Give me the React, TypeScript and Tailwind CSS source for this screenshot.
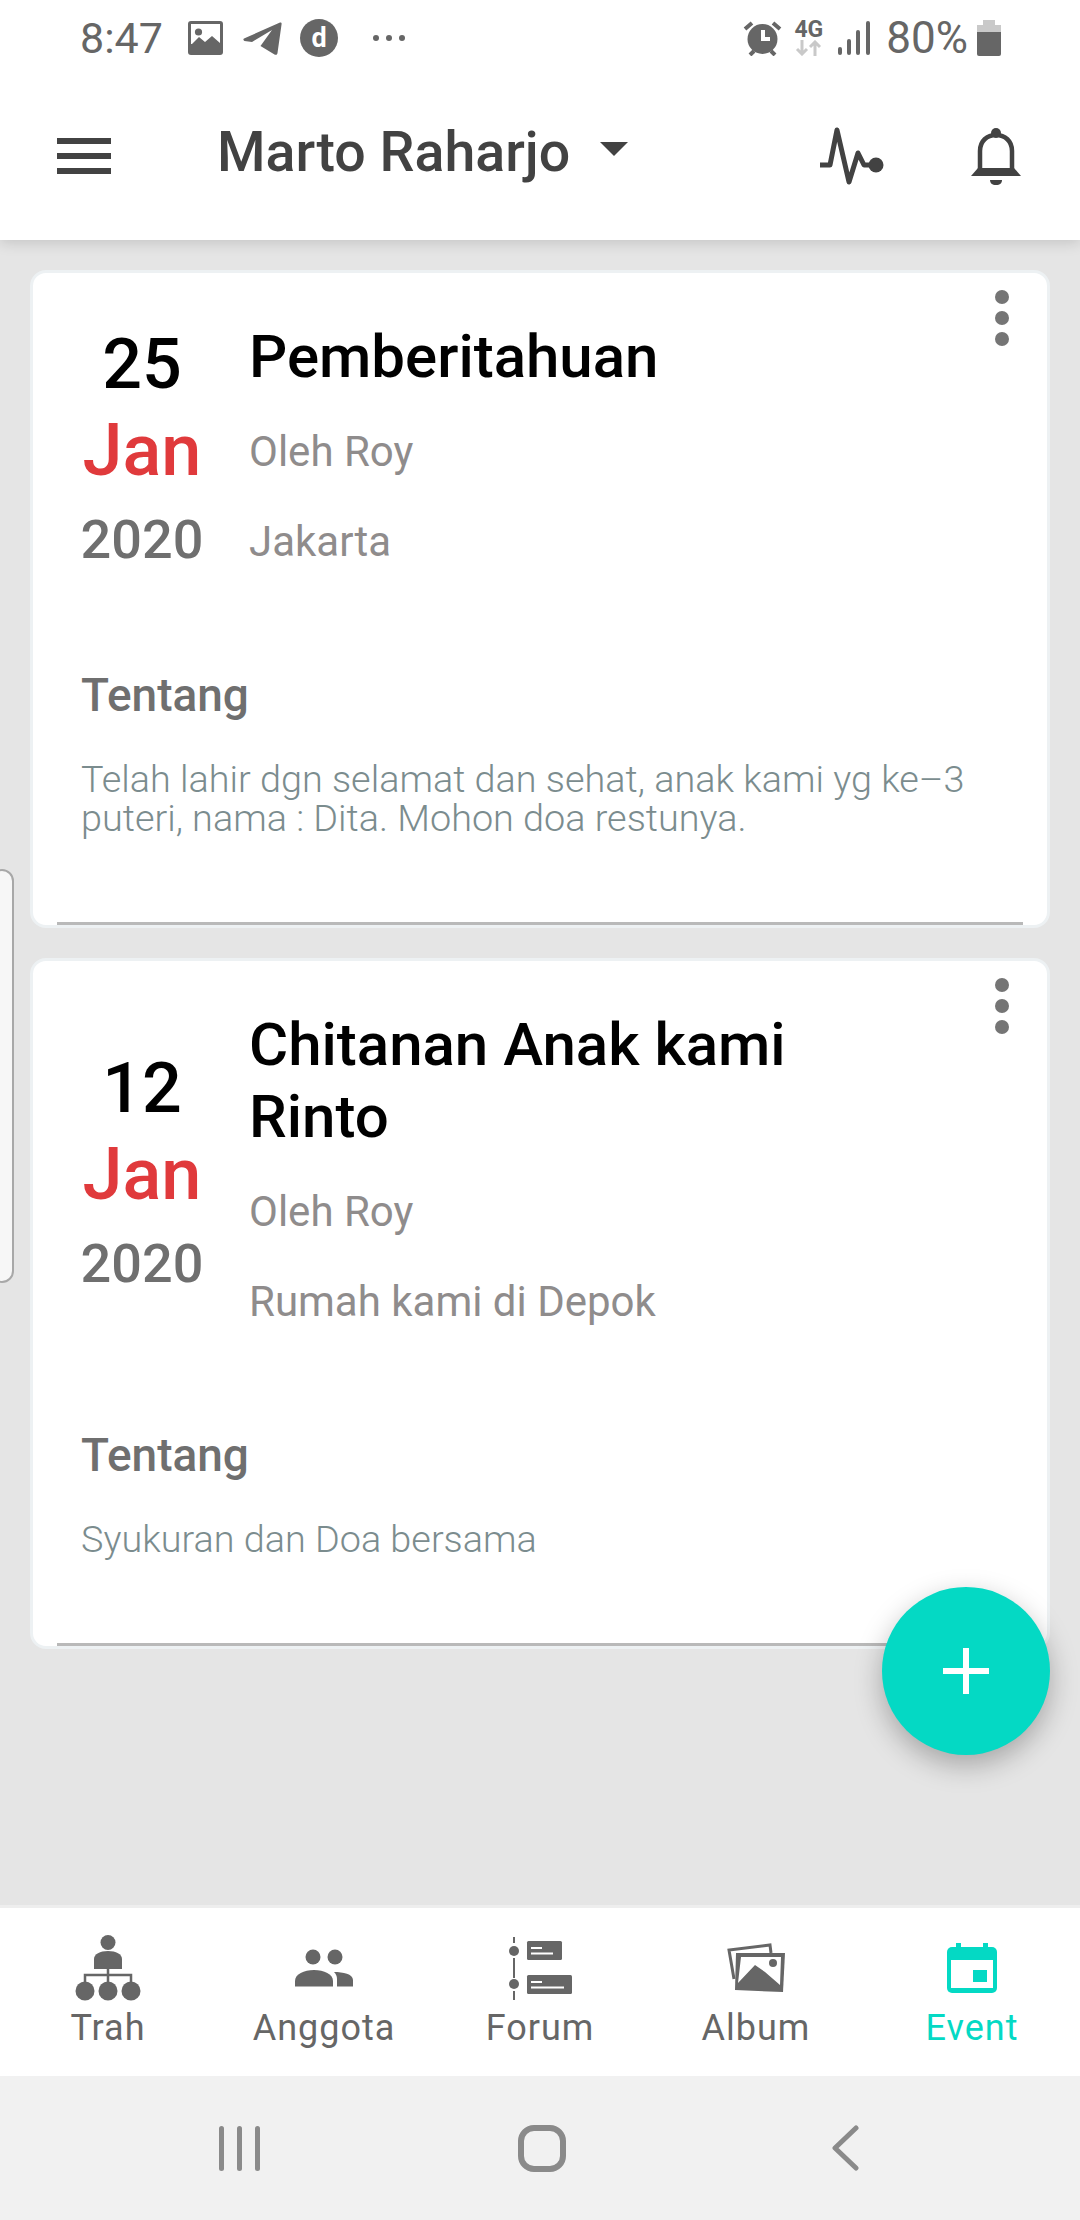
const font = { fontFamily: "Roboto, sans-serif" };

const ImageIcon = () => (
  <svg width="35" height="34" viewBox="0 0 35 34" className="text-[#666]">
    <rect width="35" height="34" rx="3" fill="currentColor" />
    <rect x="3" y="3" width="29" height="20" fill="#fff" />
    <circle cx="10.5" cy="11" r="3.6" fill="currentColor" />
    <path d="M3 24l8-8 6 5 7-6 8 7v6H3z" fill="currentColor" />
  </svg>
);

const TelegramIcon = () => (
  <svg width="39" height="33" viewBox="0 0 39 33" className="text-[#666]">
    <path
      d="M1 16.5 37 0.5c1-.4 1.8.3 1.6 1.4L34.5 31c-.2 1.8-1.700 2.300-3 1.500L17.500 24 29 8 9 20 1.500 19c-1.300-.4-1.500-2-.5-2.500z"
      fill="currentColor"
    />
  </svg>
);

const AlarmIcon = () => (
  <svg width="39" height="36" viewBox="0 0 39 36">
    <circle cx="19.5" cy="19" r="15" fill="#666" />
    <path d="M2 9 9 3M37 9l-7-6" stroke="#666" strokeWidth="4" />
    <path d="M7 35l4-4M32 35l-4-4" stroke="#666" strokeWidth="4" />
    <path d="M18 10v11h9v-4h-5v-7z" fill="#fff" />
  </svg>
);

const Pulse = () => (
  <svg width="64" height="58" viewBox="0 0 64 58" fill="none">
    <path
      d="M0 38h10L17 3l12 52 9-29 6 12h10"
      stroke="#424242"
      strokeWidth="5"
      strokeLinecap="round"
      strokeLinejoin="round"
    />
    <circle cx="56" cy="38" r="7.5" fill="#424242" />
  </svg>
);

const Bell = () => (
  <svg width="50" height="58" viewBox="0 0 50 58" fill="none">
    <circle cx="25" cy="6" r="5" fill="#424242" />
    <path d="M9 46V24C9 14 16 8 25 8s16 6 16 16v22" stroke="#424242" strokeWidth="4.5" />
    <path d="M0 49 7 41h36l7 8z" fill="#424242" />
    <path d="M19 53h12c0 3-2 5-6 5s-6-2-6-5z" fill="#424242" />
  </svg>
);

const TrahIcon = () => (
  <svg width="66" height="66" viewBox="0 0 66 66" fill="#666">
    <circle cx="33" cy="7.5" r="7.5" />
    <path d="M19 34V24c0-5 6-8 14-8s14 3 14 8v10z" />
    <path d="M33 34v14M10 48v-8h46v8" stroke="#666" strokeWidth="2.500" fill="none" />
    <circle cx="10" cy="56" r="9.500" />
    <circle cx="33" cy="56" r="9.500" />
    <circle cx="56" cy="56" r="9.500" />
  </svg>
);

const AnggotaIcon = () => (
  <svg width="58" height="38" viewBox="0 0 58 38" fill="#666">
    <circle cx="18" cy="8" r="7.500" />
    <circle cx="40" cy="8" r="7.500" />
    <path d="M0 37.500V32c0-7 9-11 19-11s19 4 19 11v5.500z" />
    <path d="M42 37.500V30c0-3-1-5-3-7 9 0 19 2 19 8v6.500z" />
  </svg>
);

const ForumIcon = () => (
  <svg width="63" height="63" viewBox="0 0 63 63" fill="#666">
    <rect x="4" width="2" height="6" />
    <rect x="4" y="21" width="2" height="20" />
    <rect x="4" y="54" width="2" height="9" />
    <circle cx="5" cy="14" r="5" />
    <circle cx="5" cy="47" r="5" />
    <rect x="18" y="4" width="35" height="19" rx="1.500" />
    <rect x="18" y="38" width="45" height="19" rx="1.500" />
    <rect x="22" y="10" width="11" height="2" fill="#fff" />
    <rect x="22" y="15.500" width="22" height="2" fill="#fff" />
    <rect x="22" y="44" width="11" height="2" fill="#fff" />
    <rect x="22" y="49.500" width="33" height="2" fill="#fff" />
  </svg>
);

const AlbumIcon = () => (
  <svg width="58" height="50" viewBox="0 0 58 50" fill="none">
    <path d="M7 36 2 7l41-5 1 8" stroke="#666" strokeWidth="3" />
    <path d="M9 10h49l-2 39-48-2z" fill="#666" />
    <path d="M14 14h40l-1 28-15-13-10-7-17 18z" fill="#fff" />
    <circle cx="46" cy="20" r="4" fill="#666" />
  </svg>
);

const EventIcon = () => (
  <svg width="50" height="50" viewBox="0 0 50 50" fill="#04d9c4">
    <rect x="9" width="5" height="6" />
    <rect x="36" width="5" height="6" />
    <path d="M5 4h40a5 5 0 0 1 5 5v36a5 5 0 0 1-5 5H5a5 5 0 0 1-5-5V9a5 5 0 0 1 5-5z" />
    <rect x="4" y="17" width="42" height="28" fill="#fff" />
    <rect x="26" y="27" width="14" height="12" />
  </svg>
);

const tabs = [
  { label: "Trah", icon: <TrahIcon />, active: false },
  { label: "Anggota", icon: <AnggotaIcon />, active: false },
  { label: "Forum", icon: <ForumIcon />, active: false },
  { label: "Album", icon: <AlbumIcon />, active: false },
  { label: "Event", icon: <EventIcon />, active: true },
];

const EventCard: React.FC<{
  day: string;
  title: string[];
  place: string;
  about: string[];
}> = ({ day, title, place, about }) => (
  <div className="relative rounded-[16px] border-[3px] border-[#edf1f3] bg-white">
    <div className="absolute right-[38px] top-[17px] flex flex-col gap-[7px]">
      <div className="h-[14px] w-[14px] rounded-full bg-[#757575]" />
      <div className="h-[14px] w-[14px] rounded-full bg-[#757575]" />
      <div className="h-[14px] w-[14px] rounded-full bg-[#757575]" />
    </div>
    <div className="flex items-center pl-[25px] pt-[48px]">
      <div className="w-[168px] text-center font-medium">
        <div className="h-[88px] text-[70px] leading-[84px] text-black">{day}</div>
        <div className="h-[88px] text-[72px] leading-[82px] text-[#e03a3c]">Jan</div>
        <div className="h-[88px] text-[54px] leading-[84px] text-[#6f6f6f]">2020</div>
      </div>
      <div className="ml-[23px]">
        {title.map((line) => (
          <div key={line} className="text-[60px] font-medium leading-[72px] text-black">
            {line}
          </div>
        ))}
        <div className="mt-[14px] text-[42px] leading-[90px] text-[#8f8c8c]">Oleh Roy</div>
        <div className="text-[42px] leading-[90px] text-[#8f8c8c]">{place}</div>
      </div>
    </div>
    <div className="px-[24px]">
      <div className="pl-[24px]">
        <div className="mt-[79px] text-[46px] font-medium leading-[58px] text-[#6f6f6f]">Tentang</div>
        <div className="mb-[84px] mt-[36px] text-[37.8px] font-light leading-[39px] text-[#7b8c8e]">
          {about.map((line) => (
            <div key={line}>{line}</div>
          ))}
        </div>
      </div>
      <div className="h-[3px] bg-[#b9b9b9]" />
    </div>
  </div>
);

export default function App() {
  return (
    <div className="relative flex h-[2220px] w-[1080px] flex-col overflow-hidden bg-[#e5e5e5]" style={font}>
      <div className="relative z-10 bg-white shadow-[0_2px_14px_rgba(0,0,0,0.16)]">
        <div className="flex h-[76px] items-center pl-[80px] pr-[79px] text-[#666]">
          <span className="w-[108px] text-[43px] leading-[76px]">8:47</span>
          <ImageIcon />
          <span className="ml-[20px]">
            <TelegramIcon />
          </span>
          <span className="ml-[18px] flex h-[38px] w-[38px] items-center justify-center rounded-full bg-[#666] text-[27px] font-bold leading-none text-white">
            d
          </span>
          <span className="ml-[35px] flex gap-[7px]">
            <span className="h-[6px] w-[6px] rounded-full bg-[#666]" />
            <span className="h-[6px] w-[6px] rounded-full bg-[#666]" />
            <span className="h-[6px] w-[6px] rounded-full bg-[#666]" />
          </span>
          <span className="ml-auto">
            <AlarmIcon />
          </span>
          <span className="ml-[13px] flex w-[27px] flex-col items-center">
            <span className="text-[23px] font-bold leading-[20px]">4G</span>
            <svg width="27" height="16" viewBox="0 0 27 16" fill="none" stroke="#c9c9c9" strokeWidth="3">
              <path d="M7 0v14M2 9l5 5 5-5M20 16V2M15 7l5-5 5 5" />
            </svg>
          </span>
          <svg width="32" height="34" viewBox="0 0 32 34" fill="#666" className="ml-[16px]">
            <rect y="26" width="4" height="8" rx="2" />
            <rect x="9" y="18" width="4" height="16" rx="2" />
            <rect x="18" y="9" width="4" height="25" rx="2" />
            <rect x="28" width="4" height="34" rx="2" />
          </svg>
          <span className="ml-[16px] text-[44px] leading-[76px]">80%</span>
          <svg width="24" height="36" viewBox="0 0 24 36" className="ml-[9px]">
            <rect x="6" width="12" height="6" fill="#c9c9c9" />
            <rect y="5" width="24" height="7" fill="#c9c9c9" />
            <path d="M0 12h24v22a2 2 0 0 1-2 2H2a2 2 0 0 1-2-2z" fill="#666" />
          </svg>
        </div>
        <div className="flex h-[164px] items-center pb-[4px] pl-[57px] pr-[59px] text-[#424242]">
          <div className="flex w-[54px] flex-col gap-[9px]">
            <div className="h-[6px] bg-[#424242]" />
            <div className="h-[6px] bg-[#424242]" />
            <div className="h-[6px] bg-[#424242]" />
          </div>
          <span className="ml-[106px] mb-[6px] text-[55.5px] font-medium leading-[60px]">Marto Raharjo</span>
          <span className="mb-[14px] ml-[30px] h-0 w-0 border-x-[14px] border-t-[14px] border-x-transparent border-t-[#424242]" />
          <span className="ml-auto">
            <Pulse />
          </span>
          <span className="ml-[87px]">
            <Bell />
          </span>
        </div>
      </div>

      <main className="flex flex-1 flex-col gap-[30px] px-[30px] pt-[30px]">
        <EventCard
          day="25"
          title={["Pemberitahuan"]}
          place="Jakarta"
          about={["Telah lahir dgn selamat dan sehat, anak kami yg ke–3", "puteri, nama : Dita. Mohon doa restunya."]}
        />
        <EventCard
          day="12"
          title={["Chitanan Anak kami", "Rinto"]}
          place="Rumah kami di Depok"
          about={["Syukuran dan Doa bersama"]}
        />
      </main>

      <div className="grid h-[171px] grid-cols-5 border-t-[3px] border-[#eeeeee] bg-white">
        {tabs.map((tab) => (
          <div key={tab.label} className="flex flex-col items-center pt-[21px]">
            <div className="flex h-[78px] items-center justify-center">{tab.icon}</div>
            <div className={`mt-[1px] text-[36px] leading-[40px] tracking-[1px] ${tab.active ? "text-[#04d9c4]" : "text-[#666]"}`}>
              {tab.label}
            </div>
          </div>
        ))}
      </div>

      <div className="flex h-[144px] items-center bg-[#f1f1f1]">
        <div className="ml-[219px] flex gap-[13px]">
          <div className="h-[45px] w-[5px] rounded-full bg-[#8a8a8a]" />
          <div className="h-[45px] w-[5px] rounded-full bg-[#8a8a8a]" />
          <div className="h-[45px] w-[5px] rounded-full bg-[#8a8a8a]" />
        </div>
        <div className="ml-[258px] h-[47px] w-[48px] rounded-[16px] border-[6px] border-[#8a8a8a]" />
        <svg width="28" height="46" viewBox="0 0 28 46" fill="none" className="ml-[265px]">
          <path d="M25 3 4 23l21 20" stroke="#8a8a8a" strokeWidth="5" strokeLinecap="round" strokeLinejoin="round" />
        </svg>
      </div>

      {/* edge panel handle */}
      <div className="absolute left-[-10px] top-[869px] h-[414px] w-[24px] rounded-[14px] border-2 border-[#a8a8a8] bg-[#f7f7f7]" />

      {/* fab */}
      <div className="absolute left-[882px] top-[1587px] z-20 flex h-[168px] w-[168px] items-center justify-center rounded-full bg-[#04d9c4] shadow-[0_10px_28px_rgba(0,0,0,0.28)]">
        <svg width="46" height="46" viewBox="0 0 46 46" fill="#fff">
          <rect x="20" width="6" height="46" />
          <rect y="20" width="46" height="6" />
        </svg>
      </div>
    </div>
  );
}
